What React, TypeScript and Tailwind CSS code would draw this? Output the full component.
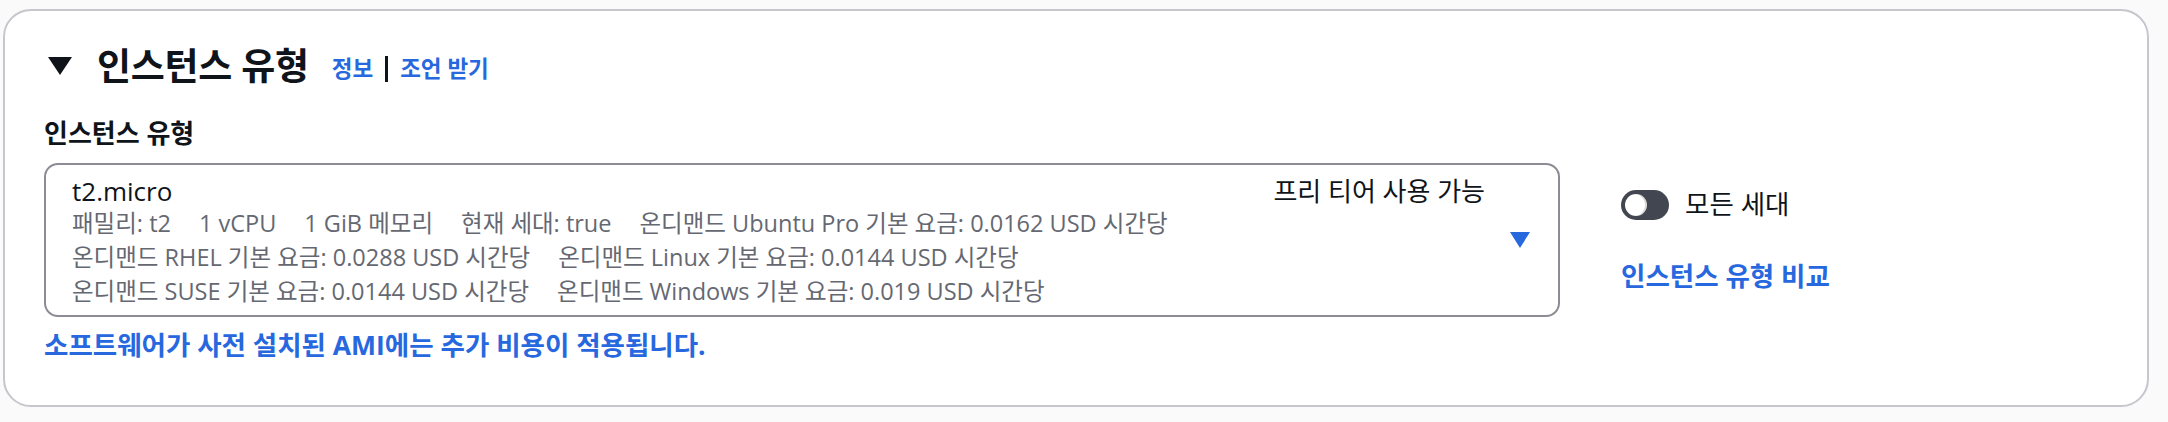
import React from "react";

function Row({ items }: { items: string[] }) {
  return (
    <div className="flex gap-[28px] h-[34px] items-center whitespace-nowrap">
      {items.map((t) => (
        <span key={t}>{t}</span>
      ))}
    </div>
  );
}

export default function App() {
  return (
    <div className="w-[2168px] h-[422px] bg-[#fafafa] pt-[9px] pl-[3px] font-['Open_Sans','Noto_Sans_CJK_KR',sans-serif] text-[#0f141a]">
      <div className="w-[2146px] h-[398px] bg-white border-2 border-[#c6c6cd] rounded-[28px] pl-[39px] pt-[35px]">
        {/* header */}
        <div className="flex items-center h-[40px]">
          <svg width="24" height="18" viewBox="0 0 24 18" className="ml-[4px]">
            <path d="M0 0 H24 L12 18 Z" fill="#0f141a" />
          </svg>
          <h2 className="ml-[25px] text-[37px] leading-[40px] font-bold tracking-[-0.3px]">인스턴스 유형</h2>
          <div className="ml-[23px] flex items-center text-[22.5px] font-semibold text-[#2768de] mt-[6px]">
            <span>정보</span>
            <span className="mx-[12px] w-[3px] h-[26px] bg-[#0f141a]" />
            <span>조언 받기</span>
          </div>
        </div>

        {/* label */}
        <div className="mt-[30px] text-[26px] leading-[35px] font-bold">인스턴스 유형</div>

        <div className="mt-[12px] flex items-start">
          {/* select */}
          <div className="w-[1516px] h-[154px] border-2 border-[#8c8c94] rounded-[14px] flex pl-[26px] pr-[28px] pt-[10px]">
            <div className="flex-1">
              <div className="text-[26px] leading-[32px]">t2.micro</div>
              <div className="text-[23.5px] text-[#656871]">
                <Row items={["패밀리: t2", "1 vCPU", "1 GiB 메모리", "현재 세대: true", "온디맨드 Ubuntu Pro 기본 요금: 0.0162 USD 시간당"]} />
                <Row items={["온디맨드 RHEL 기본 요금: 0.0288 USD 시간당", "온디맨드 Linux 기본 요금: 0.0144 USD 시간당"]} />
                <Row items={["온디맨드 SUSE 기본 요금: 0.0144 USD 시간당", "온디맨드 Windows 기본 요금: 0.019 USD 시간당"]} />
              </div>
            </div>
            <div className="text-[26px] leading-[32px] whitespace-nowrap">프리 티어 사용 가능</div>
            <div className="ml-[25px] self-stretch flex items-center pb-[10px]">
              <svg width="20" height="16" viewBox="0 0 20 16">
                <path d="M0 0 H20 L10 16 Z" fill="#2768de" />
              </svg>
            </div>
          </div>

          {/* right column */}
          <div className="ml-[61px] pt-[24px]">
            <div className="flex items-center h-[35px]">
              <div className="w-[48px] h-[30px] rounded-full bg-[#424650] flex items-center pl-[4px]">
                <div className="w-[22px] h-[22px] rounded-full bg-white shadow-[inset_-2px_0_0_rgba(0,0,0,0.15)]" />
              </div>
              <span className="ml-[16px] text-[26.5px] leading-[35px]">모든 세대</span>
            </div>
            <div className="mt-[37px] text-[26.5px] leading-[35px] font-bold text-[#2768de]">인스턴스 유형 비교</div>
          </div>
        </div>

        <div className="mt-[11px] text-[26.5px] leading-[35px] font-bold text-[#2768de]">
          소프트웨어가 사전 설치된 AMI에는 추가 비용이 적용됩니다.
        </div>
      </div>
    </div>
  );
}
